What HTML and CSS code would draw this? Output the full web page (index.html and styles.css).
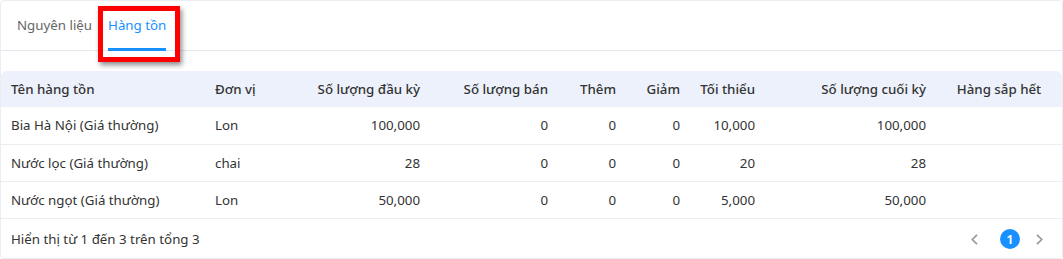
FILE: index.html
```html
<!DOCTYPE html>
<html lang="vi">
<head>
<meta charset="utf-8">
<link rel="stylesheet" href="styles.css">
</head>
<body>
<div class="card">
  <div class="tabs">
    <div class="tab">Nguyên liệu</div>
    <div class="tab active">Hàng tồn</div>
    <div class="highlight"></div>
  </div>
  <div class="table-wrap">
    <table class="grid">
      <colgroup>
        <col class="c1"><col class="c2"><col class="c3"><col class="c4"><col class="c5"><col class="c6"><col class="c7"><col class="c8"><col class="c9">
      </colgroup>
      <thead>
        <tr>
          <th class="l">Tên hàng tồn</th>
          <th class="l">Đơn vị</th>
          <th class="r">Số lượng đầu kỳ</th>
          <th class="r">Số lượng bán</th>
          <th class="r">Thêm</th>
          <th class="r">Giảm</th>
          <th class="r">Tối thiểu</th>
          <th class="r">Số lượng cuối kỳ</th>
          <th class="c">Hàng sắp hết</th>
        </tr>
      </thead>
      <tbody>
        <tr>
          <td class="l">Bia Hà Nội (Giá thường)</td><td class="l">Lon</td><td class="r">100,000</td><td class="r">0</td><td class="r">0</td><td class="r">0</td><td class="r">10,000</td><td class="r">100,000</td><td class="c"></td>
        </tr>
        <tr>
          <td class="l">Nước lọc (Giá thường)</td><td class="l">chai</td><td class="r">28</td><td class="r">0</td><td class="r">0</td><td class="r">0</td><td class="r">20</td><td class="r">28</td><td class="c"></td>
        </tr>
        <tr>
          <td class="l">Nước ngọt (Giá thường)</td><td class="l">Lon</td><td class="r">50,000</td><td class="r">0</td><td class="r">0</td><td class="r">0</td><td class="r">5,000</td><td class="r">50,000</td><td class="c"></td>
        </tr>
      </tbody>
    </table>
  </div>
  <div class="footer">
    <span class="info">Hiển thị từ 1 đến 3 trên tổng 3</span>
    <div class="pager">
      <span class="arrow prev"><svg width="7" height="11" viewBox="0 0 7 11"><path d="M6 0.8 L1.3 5.5 L6 10.2" fill="none" stroke="#999" stroke-width="1.7"/></svg></span>
      <span class="page">1</span>
      <span class="arrow next"><svg width="7" height="11" viewBox="0 0 7 11"><path d="M1 0.8 L5.7 5.5 L1 10.2" fill="none" stroke="#999" stroke-width="1.7"/></svg></span>
    </div>
  </div>
</div>
</body>
</html>
```
FILE: styles.css
```css
* { box-sizing: border-box; }
html, body { margin: 0; padding: 0; background: #fff; }
body {
  font-family: "Noto Sans", "Open Sans", sans-serif;
  font-size: 13.3px;
  color: #333;
}
.card {
  width: 1063px;
  height: 259px;
  border: 1px solid #ebedf0;
  border-radius: 4px;
  background: #fff;
  overflow: hidden;
}
.tabs {
  position: relative;
  display: flex;
  gap: 16px;
  height: 50px;
  padding-left: 16px;
  border-bottom: 1px solid #e4e7ed;
}
.tab {
  color: #666;
  padding-top: 14px;
  line-height: 20px;
  height: 49px;
  border-bottom: 3px solid transparent;
}
.tab.active {
  color: #1890ff;
  border-bottom-color: #1890ff;
  height: 50px;
  margin-bottom: -1px;
}
.highlight {
  position: absolute;
  left: 97px;
  top: 5px;
  width: 82px;
  height: 56px;
  border: 5px solid #ff0000;
  box-shadow: 2px 3px 5px rgba(0,0,0,0.45);
  pointer-events: none;
}
.table-wrap {
  padding-top: 20px;
}
.grid {
  width: 1061px;
  border-collapse: collapse;
  table-layout: fixed;
}
.c1 { width: 204px; }
.c2 { width: 85px; }
.c3 { width: 140px; }
.c4 { width: 128px; }
.c5 { width: 68px; }
.c6 { width: 64px; }
.c7 { width: 75px; }
.c8 { width: 171px; }
.c9 { width: 126px; }
.grid th {
  background: #edf1fb;
  font-weight: 500;
  color: #333;
  height: 36px;
  padding: 0 10px;
  white-space: nowrap;
}
.grid thead th:first-child { border-top-left-radius: 6px; }
.grid thead th:last-child { border-top-right-radius: 6px; }
.grid td {
  height: 37px;
  padding: 0 10px;
  border-bottom: 1px solid #ebedf0;
  white-space: nowrap;
  color: #333;
}
.l { text-align: left; }
.r { text-align: right; }
.c { text-align: center; }
.footer {
  display: flex;
  align-items: center;
  justify-content: space-between;
  height: 41px;
  padding: 0 10px;
}
.pager {
  display: flex;
  align-items: center;
  padding-right: 9px;
}
.arrow { display: flex; align-items: center; }
.prev { margin-right: 22px; }
.next { margin-left: 16px; }
.page {
  width: 20px;
  height: 20px;
  border-radius: 50%;
  background: #1890ff;
  color: #fff;
  font-size: 13px;
  font-weight: 600;
  display: flex;
  align-items: center;
  justify-content: center;
}
```
